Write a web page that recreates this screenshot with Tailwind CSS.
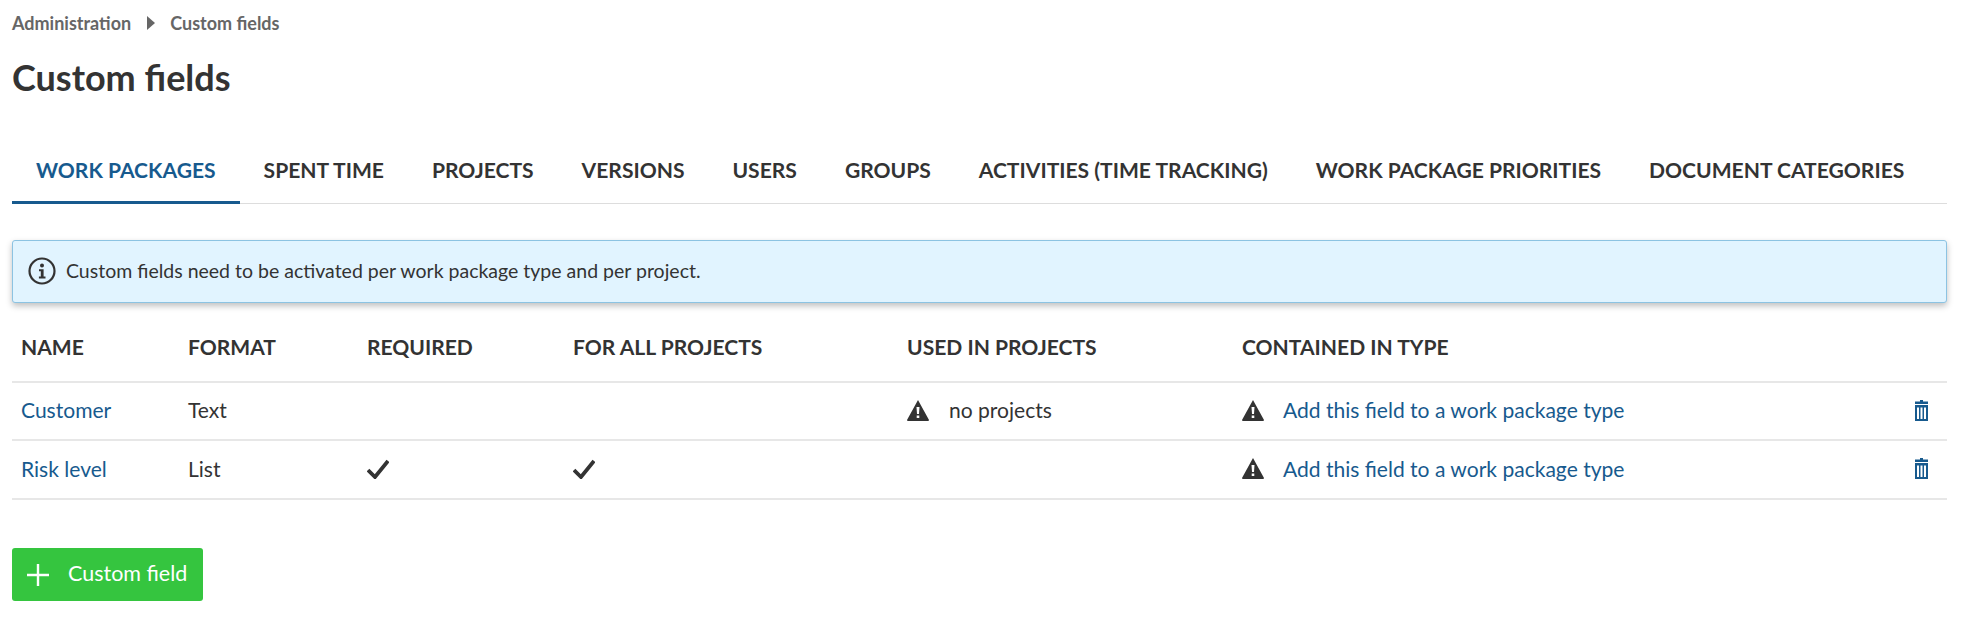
<!DOCTYPE html>
<html lang="en">

<head>
    <meta charset="UTF-8">
    <title>Custom fields</title>
    <script src="https://cdn.jsdelivr.net/npm/@tailwindcss/browser@4"></script>
</head>

<body class="bg-white font-['Lato','Noto_Sans',sans-serif] text-[#333] overflow-hidden">
    <div class="w-[1970px] h-[632px] pl-3 pr-[23px]">
        <!-- Breadcrumb -->
        <nav class="flex items-center h-[18px] mt-[14px] text-[18px] font-bold text-[#666]">
            <span>Administration</span>
            <svg class="w-[10px] h-[14px] ml-[15px] mr-[14px]" viewBox="0 0 10 14"><path d="M1 0 L9 7 L1 14 Z" fill="#666"/></svg>
            <span>Custom fields</span>
        </nav>

        <h1 class="mt-[26px] text-[36px] leading-[38px] font-bold text-[#333]">Custom fields</h1>

        <!-- Tabs -->
        <div class="flex mt-[42px] h-[66px] border-b border-[#ddd] text-[21.07px] font-bold uppercase">
            <a class="flex items-center px-6 h-[66px] border-b-[3px] border-[#175a8e] text-[#175a8e]">Work packages</a>
            <a class="flex items-center px-6 h-[66px] border-b-[3px] border-transparent">Spent time</a>
            <a class="flex items-center px-6 h-[66px] border-b-[3px] border-transparent">Projects</a>
            <a class="flex items-center px-6 h-[66px] border-b-[3px] border-transparent">Versions</a>
            <a class="flex items-center px-6 h-[66px] border-b-[3px] border-transparent">Users</a>
            <a class="flex items-center px-6 h-[66px] border-b-[3px] border-transparent">Groups</a>
            <a class="flex items-center px-6 h-[66px] border-b-[3px] border-transparent">Activities (time tracking)</a>
            <a class="flex items-center px-6 h-[66px] border-b-[3px] border-transparent">Work package priorities</a>
            <a class="flex items-center px-6 h-[66px] border-b-[3px] border-transparent">Document categories</a>
        </div>

        <!-- Notification -->
        <div class="flex items-center mt-9 h-[63px] pl-[15px] bg-[#e1f4ff] border border-[#8cc3e2] rounded-[3px] shadow-[0_3px_6px_rgba(0,0,0,0.25)] text-[19.5px]">
            <svg class="w-[28px] h-[28px] mr-[10px] mb-[2px]" viewBox="0 0 28 28" fill="none">
                <circle cx="14" cy="14" r="12.5" stroke="#333" stroke-width="2.2"/>
                <circle cx="14" cy="8.5" r="2" fill="#333"/>
                <path d="M11 12.3h4.6v7.2h1.9v2h-6.6v-2h1.9v-5.2h-1.8z" fill="#333"/>
            </svg>
            <span class="pb-[2px]">Custom fields need to be activated per work package type and per project.</span>
        </div>

        <!-- Table -->
        <table class="mt-[9px] w-[1935px] table-fixed border-collapse text-[21.06px]">
            <colgroup>
                <col class="w-[167px]"><col class="w-[179px]"><col class="w-[206px]"><col class="w-[334px]"><col class="w-[335px]"><col class="w-[650px]"><col class="w-[64px]">
            </colgroup>
            <thead>
                <tr class="h-[70px] text-left text-[21.06px] font-bold uppercase">
                    <th class="pl-[9px] font-bold">Name</th>
                    <th class="pl-[9px] font-bold">Format</th>
                    <th class="pl-[9px] font-bold">Required</th>
                    <th class="pl-[9px] font-bold">For all projects</th>
                    <th class="pl-[9px] font-bold">Used in projects</th>
                    <th class="pl-[9px] font-bold">Contained in type</th>
                    <th></th>
                </tr>
            </thead>
            <tbody>
                <tr class="h-[58px] border-t-2 border-[#e7e7e7]">
                    <td class="pl-[9px] pb-[2px] text-[#175a8e]">Customer</td>
                    <td class="pl-[9px] pb-[2px]">Text</td>
                    <td></td>
                    <td></td>
                    <td class="pl-[9px] pb-[2px]">
                        <div class="flex items-center">
                            <svg class="w-[22px] h-[21px] mr-[20px]" viewBox="0 0 22 21"><path fill-rule="evenodd" d="M11 0 L22 20 Q22 21 21 21 L1 21 Q0 21 0 20 Z M9.5 7 L10 14 L12 14 L12.5 7 Z M9.7 15.5 V18 H12.3 V15.5 Z" fill="#333"/></svg>
                            <span>no projects</span>
                        </div>
                    </td>
                    <td class="pl-[9px] pb-[2px]">
                        <div class="flex items-center">
                            <svg class="w-[22px] h-[21px] mr-[19px]" viewBox="0 0 22 21"><path fill-rule="evenodd" d="M11 0 L22 20 Q22 21 21 21 L1 21 Q0 21 0 20 Z M9.5 7 L10 14 L12 14 L12.5 7 Z M9.7 15.5 V18 H12.3 V15.5 Z" fill="#333"/></svg>
                            <a class="text-[#175a8e]">Add this field to a work package type</a>
                        </div>
                    </td>
                    <td class="pb-[2px]">
                        <svg class="w-[15px] h-[21px] ml-[31px]" viewBox="0 0 14 21"><path d="M5.5 1.5V0h3v1.5z M0.5 1.5h13V4H0.5z" fill="#175a8e"/><path fill-rule="evenodd" d="M0.5 5h13V21H0.5z M2.5 7.5v11.5h2V7.5z M6 7.5v11.5h2V7.5z M9.5 7.5v11.5h2V7.5z" fill="#175a8e"/></svg>
                    </td>
                </tr>
                <tr class="h-[59px] border-t-2 border-b-2 border-[#e7e7e7]">
                    <td class="pl-[9px] pb-[2px] text-[#175a8e]">Risk level</td>
                    <td class="pl-[9px] pb-[2px]">List</td>
                    <td class="pl-[9px] pb-[2px]">
                        <svg class="w-[22px] h-[20px]" viewBox="0 0 22 20" fill="none"><path d="M1 11 L8 18 L21 2" stroke="#333" stroke-width="3.8"/></svg>
                    </td>
                    <td class="pl-[9px] pb-[2px]">
                        <svg class="w-[22px] h-[20px]" viewBox="0 0 22 20" fill="none"><path d="M1 11 L8 18 L21 2" stroke="#333" stroke-width="3.8"/></svg>
                    </td>
                    <td></td>
                    <td class="pl-[9px] pb-[2px]">
                        <div class="flex items-center">
                            <svg class="w-[22px] h-[21px] mr-[19px]" viewBox="0 0 22 21"><path fill-rule="evenodd" d="M11 0 L22 20 Q22 21 21 21 L1 21 Q0 21 0 20 Z M9.5 7 L10 14 L12 14 L12.5 7 Z M9.7 15.5 V18 H12.3 V15.5 Z" fill="#333"/></svg>
                            <a class="text-[#175a8e]">Add this field to a work package type</a>
                        </div>
                    </td>
                    <td class="pb-[2px]">
                        <svg class="w-[15px] h-[21px] ml-[31px]" viewBox="0 0 14 21"><path d="M5.5 1.5V0h3v1.5z M0.5 1.5h13V4H0.5z" fill="#175a8e"/><path fill-rule="evenodd" d="M0.5 5h13V21H0.5z M2.5 7.5v11.5h2V7.5z M6 7.5v11.5h2V7.5z M9.5 7.5v11.5h2V7.5z" fill="#175a8e"/></svg>
                    </td>
                </tr>
            </tbody>
        </table>

        <!-- Add button -->
        <button class="flex items-center mt-[48px] h-[53px] w-[191px] pl-[15px] bg-[#35c53f] rounded-[3px] text-white text-[21.5px]">
            <svg class="w-[22px] h-[22px] mr-[19px]" viewBox="0 0 22 22"><path d="M9.8 0h2.4v9.8H22v2.4h-9.8V22H9.8v-9.8H0V9.8h9.8z" fill="#fff"/></svg>
            <span class="pb-[2px]">Custom field</span>
        </button>
    </div>
</body>

</html>
